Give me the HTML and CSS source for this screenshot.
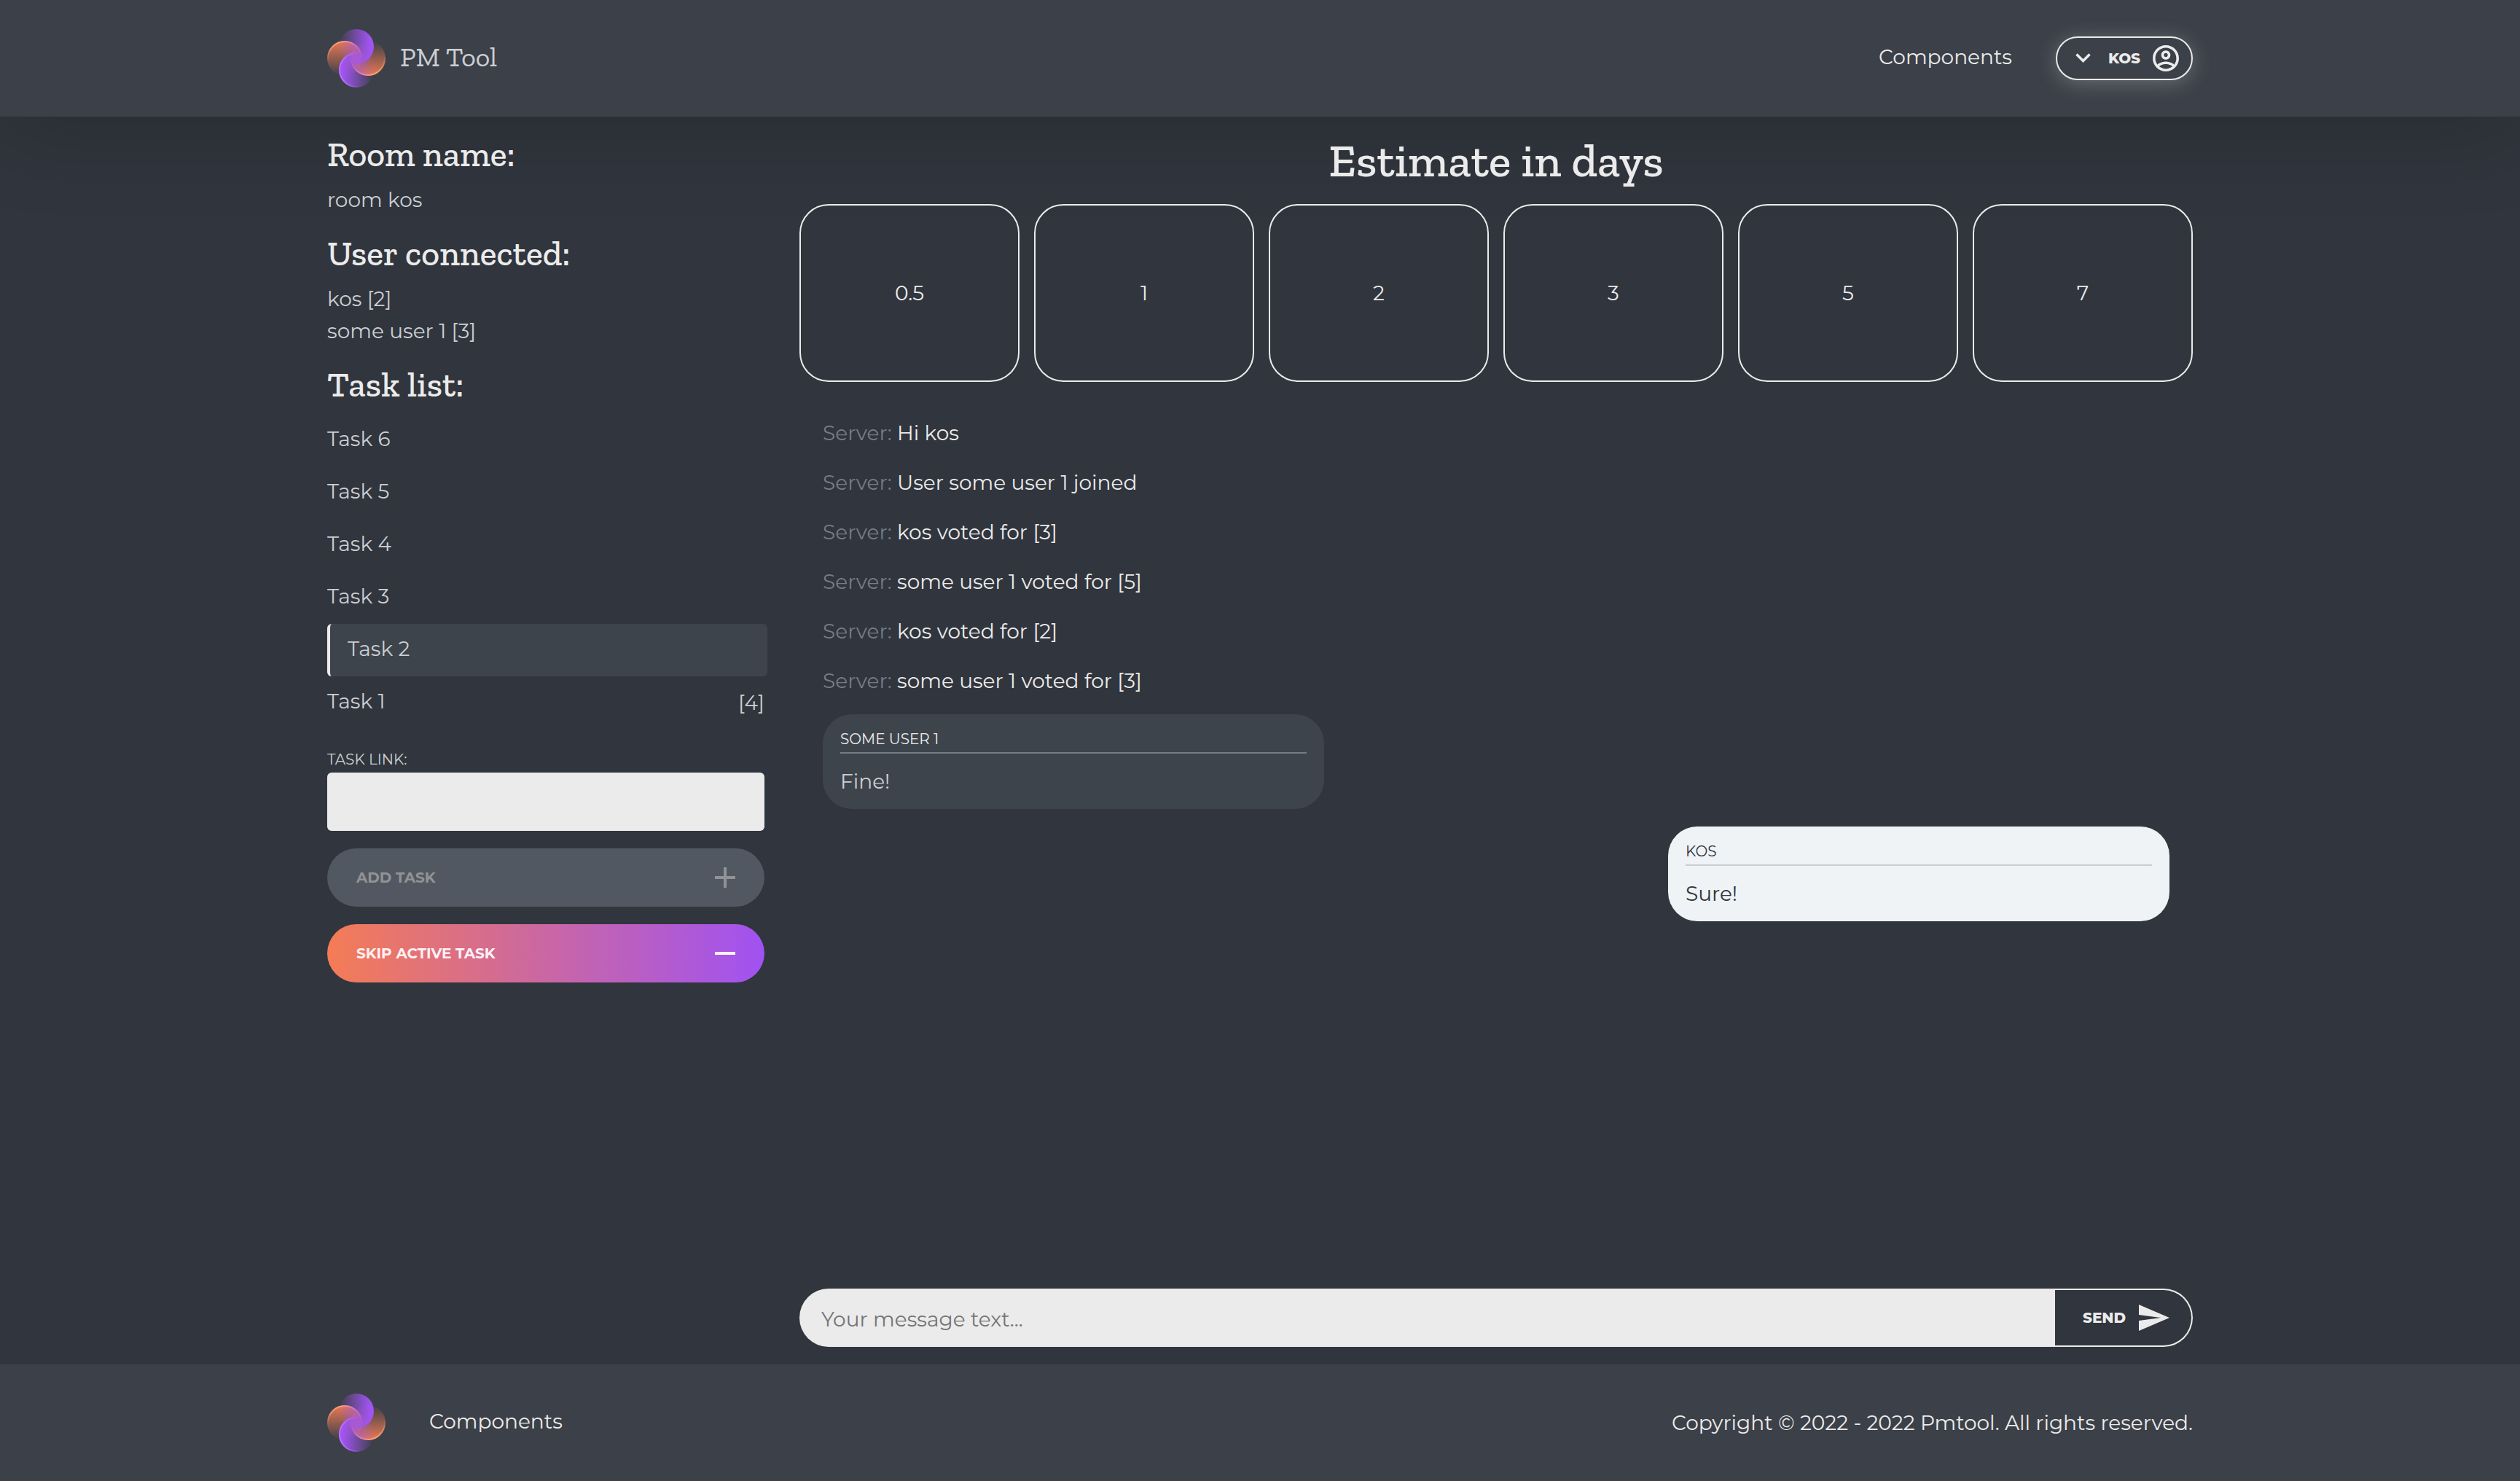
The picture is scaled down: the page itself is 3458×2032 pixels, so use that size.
FILE: index.html
```html
<!DOCTYPE html>
<html lang="en">
<head>
<meta charset="utf-8">
<meta name="viewport" content="width=device-width, initial-scale=1">
<title>PM Tool</title>
<link rel="stylesheet" href="styles.css">
</head>
<body>
<svg class="defs" aria-hidden="true">
  <defs>
    <linearGradient id="top" x1="1" y1="0" x2="0" y2="0"><stop offset="0.1" stop-color="#a154f2"/><stop offset="1" stop-color="#a154f2" stop-opacity="0"/></linearGradient>
    <linearGradient id="bottom" x1="0" y1="0" x2="1" y2="0"><stop offset="0.1" stop-color="#a154f2"/><stop offset="1" stop-color="#a154f2" stop-opacity="0"/></linearGradient>
    <linearGradient id="left" x1="0" y1="0" x2="0" y2="1"><stop offset="0" stop-color="#f47c55" stop-opacity=".95"/><stop offset="1" stop-color="#f47c55" stop-opacity="0"/></linearGradient>
    <linearGradient id="right" x1="0" y1="1" x2="0" y2="0"><stop offset="0" stop-color="#f47c55" stop-opacity=".95"/><stop offset="1" stop-color="#f47c55" stop-opacity="0"/></linearGradient>
    <linearGradient id="rim-left" x1="0" y1="0" x2="0" y2="1"><stop offset="0" stop-color="#ffb07a"/><stop offset=".6" stop-color="#ffb07a" stop-opacity="0"/></linearGradient>
    <linearGradient id="rim-right" x1="0" y1="1" x2="0" y2="0"><stop offset="0" stop-color="#ffb07a"/><stop offset=".6" stop-color="#ffb07a" stop-opacity="0"/></linearGradient>
    <linearGradient id="rim-bottom" x1="0" y1="0" x2="1" y2="0"><stop offset="0" stop-color="#c07cff"/><stop offset=".6" stop-color="#c07cff" stop-opacity="0"/></linearGradient>
    <symbol id="logo" viewBox="0 0 80 80">
      <circle cx="56" cy="40" r="24" fill="url(#right)"/>
      <circle cx="56" cy="40" r="23" fill="none" stroke="url(#rim-right)" stroke-width="2" opacity=".8"/>
      <circle cx="24" cy="40" r="24" fill="url(#left)"/>
      <circle cx="24" cy="40" r="23" fill="none" stroke="url(#rim-left)" stroke-width="2" opacity=".8"/>
      <circle cx="40" cy="24" r="24" fill="url(#top)"/>
      <circle cx="40" cy="56" r="24" fill="url(#bottom)"/>
      <circle cx="40" cy="56" r="23" fill="none" stroke="url(#rim-bottom)" stroke-width="2" opacity=".8"/>
    </symbol>
  </defs>
</svg>

<header class="header">
  <div class="container bar">
    <a class="brand" href="#"><svg class="logo" aria-hidden="true"><use href="#logo"/></svg><span>PM Tool</span></a>
    <nav class="nav">
      <a class="link" href="#">Components</a>
      <button class="user" type="button">
        <svg class="chevron" viewBox="0 0 21 14" aria-hidden="true"><path d="M1.500 1.500l9 9L19.500 1.500" fill="none" stroke="currentColor" stroke-width="3.500"/></svg>
        <span>KOS</span>
        <svg class="avatar" viewBox="2 2 20 20" fill="currentColor" aria-hidden="true"><path d="M12 2C6.480 2 2 6.480 2 12s4.480 10 10 10 10-4.480 10-10S17.520 2 12 2zM7.070 18.280c.430-.900 3.050-1.780 4.930-1.780s4.510.880 4.930 1.780C15.570 19.360 13.860 20 12 20s-3.570-.640-4.930-1.720zm11.290-1.450c-1.430-1.740-4.900-2.330-6.360-2.330s-4.930.590-6.360 2.330C4.620 15.490 4 13.820 4 12c0-4.410 3.590-8 8-8s8 3.590 8 8c0 1.820-.620 3.490-1.640 4.830zM12 6c-1.940 0-3.500 1.560-3.500 3.500S10.060 13 12 13s3.500-1.560 3.500-3.500S13.940 6 12 6zm0 5c-.830 0-1.500-.670-1.500-1.500S11.170 8 12 8s1.500.670 1.500 1.500S12.830 11 12 11z"/></svg>
      </button>
    </nav>
  </div>
</header>

<main class="container room">
  <aside class="sidebar">
    <h3 class="title">Room name:</h3>
    <p class="line">room kos</p>
    <h3 class="title">User connected:</h3>
    <ul class="list">
      <li class="line">kos [2]</li>
      <li class="line">some user 1 [3]</li>
    </ul>
    <h3 class="title">Task list:</h3>
    <ul class="list tasks">
      <li class="task">Task 6</li>
      <li class="task">Task 5</li>
      <li class="task">Task 4</li>
      <li class="task">Task 3</li>
      <li class="task active">Task 2</li>
      <li class="task"><span>Task 1</span><span class="score">[4]</span></li>
    </ul>
    <form class="task-form">
      <label class="label" for="task-link">TASK LINK:</label>
      <input class="field" id="task-link" type="text">
      <button class="button add" type="button" disabled>ADD TASK
        <svg class="sign" viewBox="0 0 28 28" aria-hidden="true"><path d="M0 14h28M14 0v28" fill="none" stroke="currentColor" stroke-width="4"/></svg>
      </button>
      <button class="button skip" type="button">SKIP ACTIVE TASK
        <svg class="sign" viewBox="0 0 28 28" aria-hidden="true"><path d="M0 14h28" fill="none" stroke="currentColor" stroke-width="4"/></svg>
      </button>
    </form>
  </aside>

  <section class="content">
    <h2 class="heading">Estimate in days</h2>
    <div class="cards">
      <button class="card" type="button">0.5</button>
      <button class="card" type="button">1</button>
      <button class="card" type="button">2</button>
      <button class="card" type="button">3</button>
      <button class="card" type="button">5</button>
      <button class="card" type="button">7</button>
    </div>
    <div class="chat">
      <p class="event"><span class="from">Server:</span> Hi kos</p>
      <p class="event"><span class="from">Server:</span> User some user 1 joined</p>
      <p class="event"><span class="from">Server:</span> kos voted for [3]</p>
      <p class="event"><span class="from">Server:</span> some user 1 voted for [5]</p>
      <p class="event"><span class="from">Server:</span> kos voted for [2]</p>
      <p class="event"><span class="from">Server:</span> some user 1 voted for [3]</p>
      <article class="message">
        <h4 class="author">SOME USER 1</h4>
        <p class="text">Fine!</p>
      </article>
      <article class="message own">
        <h4 class="author">KOS</h4>
        <p class="text">Sure!</p>
      </article>
    </div>
    <form class="composer">
      <input class="input" type="text" aria-label="Your message" placeholder="Your message text...">
      <button class="send" type="button">SEND
        <svg class="plane" viewBox="0 0 42 36" aria-hidden="true"><path d="M0 0l42 18L0 36V22l30-4L0 14Z" fill="currentColor"/></svg>
      </button>
    </form>
  </section>
</main>

<footer class="footer">
  <div class="container bar">
    <div class="foot-nav">
      <svg class="logo" aria-hidden="true"><use href="#logo"/></svg>
      <a class="link" href="#">Components</a>
    </div>
    <p class="copy">Copyright © 2022 - 2022 Pmtool. All rights reserved.</p>
  </div>
</footer>
</body>
</html>
```
FILE: styles.css
```css
:root {
  --bg: #31353d;
  --panel: #3c4048;
  --surface: #3e444c;
  --light: #ebebeb;
  --text: #cbced3;
  --muted: #757b87;
  --sans: Montserrat, Inter, sans-serif;
  --slab: "Zilla Slab", "DejaVu Serif Condensed", "DejaVu Serif", serif;
}

* { box-sizing: border-box; }

body {
  margin: 0;
  min-height: 100vh;
  display: flex;
  flex-direction: column;
  background: var(--bg);
  color: var(--text);
  font: 28px/44px var(--sans);
}

h2, h3, h4, p, ul { margin: 0; padding: 0; font-weight: 400; }
ul { list-style: none; }
button, input { font: inherit; color: inherit; margin: 0; }
a { color: inherit; text-decoration: none; }

.defs { position: absolute; width: 0; height: 0; }

.container {
  width: 100%;
  max-width: 2560px;
  margin: 0 auto;
}

.header {
  background: var(--panel);
  box-shadow: 0 20px 120px rgba(0, 0, 0, .18);
}

.bar {
  min-height: 160px;
  display: flex;
  align-items: center;
  justify-content: space-between;
}

.logo { width: 80px; height: 80px; display: block; }

.brand {
  display: flex;
  align-items: center;
  gap: 20px;
  font: 38px/44px var(--slab);
}

.brand span { padding-bottom: 4px; }

.nav { display: flex; align-items: center; gap: 60px; }
.link, .copy { color: var(--light); }
.link { padding-bottom: 4px; }

.user {
  height: 60px;
  padding: 0 17px 0 25px;
  display: flex;
  align-items: center;
  gap: 17px;
  border: 2px solid var(--light);
  border-radius: 30px;
  background: var(--panel);
  box-shadow: 0 4px 28px rgba(235, 250, 250, .25);
  color: var(--light);
  font-size: 20px;
  font-weight: 800;
}

.chevron { width: 21px; height: 14px; margin-right: 7px; }
.avatar { width: 36px; height: 36px; }

.room {
  flex: 1;
  display: grid;
  grid-template-columns: 600px 1fr;
  gap: 48px;
  padding: 24px 0;
}

.title {
  margin-bottom: 12px;
  color: var(--light);
  font: 500 48px/56px var(--slab);
}

.line + .title, .list + .title { margin-top: 24px; }

.tasks { margin-right: -4px; }

.task {
  height: 72px;
  padding: 12px 4px 12px 0;
  display: flex;
  justify-content: space-between;
}

.score { line-height: 48px; }

.task.active {
  padding-left: 24px;
  border-left: 4px solid var(--light);
  border-radius: 6px;
  background: var(--surface);
}

.task-form { margin-top: 28px; display: grid; gap: 24px; }

.label {
  margin-bottom: -20px;
  font-size: 20px;
  line-height: 28px;
}

.field {
  width: 100%;
  height: 80px;
  padding: 0 28px;
  border: 0;
  border-radius: 6px;
  background: var(--light);
  color: var(--bg);
}

.button {
  height: 80px;
  padding: 0 40px;
  display: flex;
  align-items: center;
  justify-content: space-between;
  border: 0;
  border-radius: 40px;
  font-size: 20px;
  font-weight: 700;
}

.add { background: #525861; color: #919395; }
.skip { background: linear-gradient(90deg, #f47c55, #a052f2); color: #fff0f5; }
.sign { width: 28px; height: 28px; }

.content { display: flex; flex-direction: column; }

.heading {
  margin-bottom: 24px;
  color: var(--light);
  font: 500 64px/72px var(--slab);
  text-align: center;
}

.cards {
  display: grid;
  grid-template-columns: repeat(6, 1fr);
  gap: 20px;
}

.card {
  height: 244px;
  border: 2px solid var(--light);
  border-radius: 40px;
  background: transparent;
  color: var(--light);
}

.chat {
  flex: 1;
  padding: 48px 32px;
  display: flex;
  flex-direction: column;
  gap: 24px;
}

.event { color: var(--light); }
.from { color: var(--muted); }

.message {
  width: 688px;
  padding: 20px 24px 16px;
  border-radius: 40px;
  background: var(--surface);
}

.author {
  padding-bottom: 4px;
  border-bottom: 2px solid var(--muted);
  color: var(--light);
  font-size: 20px;
  line-height: 28px;
}

.text { margin-top: 16px; }

.own { align-self: flex-end; background: #eff3f6; color: var(--bg); }
.own .author { border-color: #c9cdd1; color: var(--bg); }

.composer { display: flex; height: 80px; }

.input {
  flex: 1;
  min-width: 0;
  padding: 4px 30px 0;
  border: 0;
  border-radius: 40px 0 0 40px;
  background: var(--light);
  color: var(--bg);
}

.input::placeholder { color: #757575; opacity: 1; }

.send {
  padding: 0 30px 0 38px;
  display: flex;
  align-items: center;
  gap: 18px;
  border: 2px solid var(--light);
  border-left: 0;
  border-radius: 0 40px 40px 0;
  background: transparent;
  color: var(--light);
  font-size: 20px;
  font-weight: 800;
}

.plane { width: 42px; height: 36px; }

.footer { background: var(--panel); }
.foot-nav { display: flex; align-items: center; gap: 60px; }
```
